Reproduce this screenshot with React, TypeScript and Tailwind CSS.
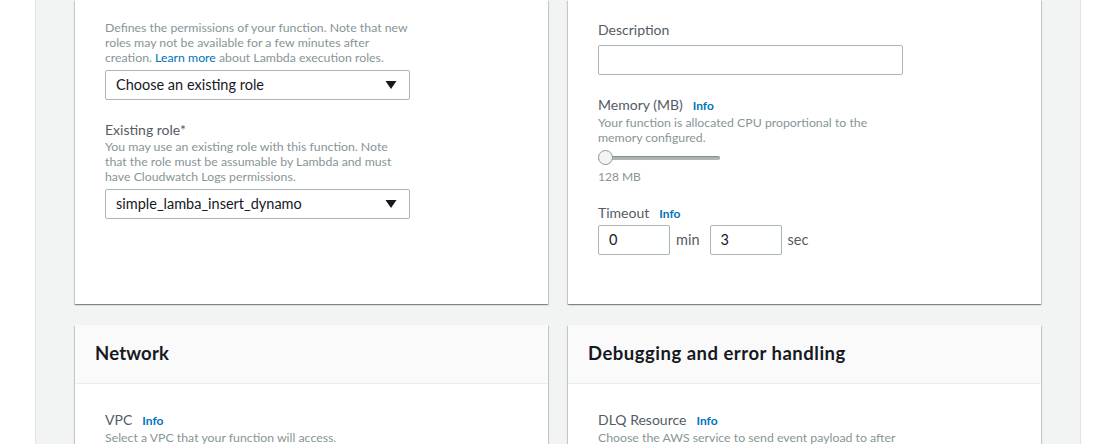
import React from "react";

const font = { fontFamily: "Lato, 'Open Sans', sans-serif" };

function Caret() {
  return (
    <svg width="12" height="10" viewBox="0 0 12 10" className="shrink-0">
      <path d="M0.5 1 L11.5 1 L6 9 Z" fill="#16191f" />
    </svg>
  );
}

function Select({ value }: { value: string }) {
  return (
    <div className="flex h-[30px] w-[305px] items-center justify-between rounded-[2px] border border-[#aab7b8] bg-white pl-[10px] pr-[12px] text-[14.5px] text-[#16191f]">
      <span>{value}</span>
      <Caret />
    </div>
  );
}

function Info() {
  return <span className="ml-[10px] text-[12px] font-bold text-[#0073bb]">Info</span>;
}

function Desc({ children }: { children: React.ReactNode }) {
  return <p className="text-[12.3px] leading-[15px] text-[#879596]">{children}</p>;
}

function Label({ children }: { children: React.ReactNode }) {
  return <div className="text-[14px] leading-[18px] text-[#545b64]">{children}</div>;
}

const cardCls =
  "bg-white shadow-[0_1px_1px_0_rgba(0,28,36,0.3),1px_1px_1px_0_rgba(0,28,36,0.15),-1px_1px_1px_0_rgba(0,28,36,0.15)]";

export default function App() {
  return (
    <div style={font} className="flex h-[444px] w-[1110px] overflow-hidden bg-white">
      <div className="ml-[35px] w-[1046px] border-x border-[#e1e4e4] bg-[#f2f3f3] px-[39px]">
        <div className="grid grid-cols-2 gap-x-[20px] gap-y-[21px]">
          {/* Card 1 */}
          <div className={`${cardCls} h-[304px] px-[30px] pt-[20px]`}>
            <Desc>
              Defines the permissions of your function. Note that new
              <br />
              roles may not be available for a few minutes after
              <br />
              creation. <span className="text-[#0073bb]">Learn more</span> about Lambda execution roles.
            </Desc>
            <div className="mt-[5px]">
              <Select value="Choose an existing role" />
            </div>
            <div className="mt-[21px]">
              <Label>Existing role*</Label>
              <Desc>
                You may use an existing role with this function. Note
                <br />
                that the role must be assumable by Lambda and must
                <br />
                have Cloudwatch Logs permissions.
              </Desc>
            </div>
            <div className="mt-[5px]">
              <Select value="simple_lamba_insert_dynamo" />
            </div>
          </div>

          {/* Card 2 */}
          <div className={`${cardCls} h-[304px] px-[30px] pt-[21px]`}>
            <Label>Description</Label>
            <div className="mt-[6px] h-[30px] w-[305px] rounded-[2px] border border-[#aab7b8] bg-white" />
            <div className="mt-[21px] flex items-baseline">
              <Label>Memory (MB)</Label>
              <Info />
            </div>
            <Desc>
              Your function is allocated CPU proportional to the
              <br />
              memory configured.
            </Desc>
            <div className="relative mt-[5px] flex h-[16px] w-[122px] items-center">
              <div className="h-[4px] w-full rounded-full bg-[#b0b6b6] shadow-[inset_0_1px_1px_rgba(0,0,0,0.25)]" />
              <div className="absolute left-0 top-0 h-[15px] w-[15px] rounded-full border border-[#8d9797] bg-[#f4f4f4]" />
            </div>
            <div className="mt-[3px] text-[12px] leading-[15px] text-[#879596]">128 MB</div>
            <div className="mt-[20px] flex items-baseline">
              <Label>Timeout</Label>
              <Info />
            </div>
            <div className="mt-[2px] flex items-center text-[14.5px] text-[#16191f]">
              <div className="flex h-[30px] w-[72px] items-center rounded-[2px] border border-[#aab7b8] pl-[10px]">0</div>
              <span className="ml-[6px] mr-[10px] text-[#545b64]">min</span>
              <div className="flex h-[30px] w-[72px] items-center rounded-[2px] border border-[#aab7b8] pl-[10px]">3</div>
              <span className="ml-[6px] text-[#545b64]">sec</span>
            </div>
          </div>

          {/* Card 3 */}
          <div className={`${cardCls} h-[200px]`}>
            <div className="flex h-[59px] items-center border-b border-[#eaeded] bg-[#fafafa] px-[20px]">
              <h2 className="text-[18.5px] font-bold tracking-[0.2px] text-[#16191f]">Network</h2>
            </div>
            <div className="px-[30px] pt-[27px]">
              <div className="flex items-baseline">
                <Label>VPC</Label>
                <Info />
              </div>
              <Desc>Select a VPC that your function will access.</Desc>
            </div>
          </div>

          {/* Card 4 */}
          <div className={`${cardCls} h-[200px]`}>
            <div className="flex h-[59px] items-center border-b border-[#eaeded] bg-[#fafafa] px-[20px]">
              <h2 className="text-[18.5px] font-bold tracking-[0.5px] text-[#16191f]">Debugging and error handling</h2>
            </div>
            <div className="px-[30px] pt-[27px]">
              <div className="flex items-baseline">
                <Label>DLQ Resource</Label>
                <Info />
              </div>
              <Desc>Choose the AWS service to send event payload to after</Desc>
            </div>
          </div>
        </div>
      </div>
    </div>
  );
}
